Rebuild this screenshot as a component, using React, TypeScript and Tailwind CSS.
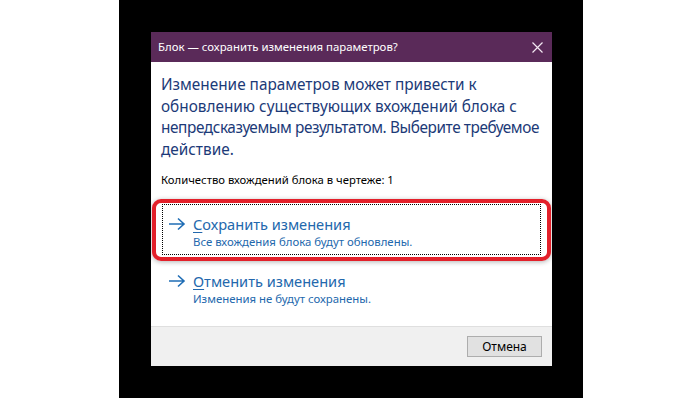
import React from "react";

const font = { fontFamily: '"Noto Sans", "Open Sans", sans-serif' };

function Arrow() {
  return (
    <svg width="18" height="14" viewBox="0 0 18 14" className="shrink-0">
      <path d="M1 7h15M10 1.5L16 7l-6 5.5" fill="none" stroke="#1f6db5" strokeWidth="1.6" />
    </svg>
  );
}

function CommandLink({ title, sub, focused }: { title: string; sub: string; focused?: boolean }) {
  return (
    <div
      className={
        "relative flex items-start gap-[7px] pl-[5px] pt-[10px] h-[51px] " +
        (focused ? "border border-dotted border-black" : "border border-transparent")
      }
    >
      <div className="pt-[2px]">
        <Arrow />
      </div>
      <div className="flex flex-col">
        <span className="text-[14.6px] leading-[18px] text-[#2368ad]">
          <span className="underline underline-offset-2 decoration-1">{title[0]}</span>
          {title.slice(1)}
        </span>
        <span className="mt-[2px] text-[11.4px] leading-[14px] text-[#2368ad]">{sub}</span>
      </div>
      {focused && (
        <div className="absolute -left-[11px] -right-[11px] -top-[6px] -bottom-[7px] rounded-[9px] border-[4px] border-[#e3202a] shadow-[0_1px_5px_rgba(0,0,0,0.3)]" />
      )}
    </div>
  );
}

export default function App() {
  return (
    <div className="w-[700px] h-[398px] bg-white" style={font}>
      <div className="ml-[119px] w-[464px] h-[398px] bg-black pt-[32px] pl-[32px]">
        <div className="w-[401px] h-[334px] bg-white flex flex-col">
          <div className="h-[30px] bg-[#5a2a59] flex items-center justify-between pl-[7px] pr-[9px]">
            <span className="text-[11.4px] text-white">Блок — сохранить изменения параметров?</span>
            <svg width="11" height="11" viewBox="0 0 11 11">
              <path d="M0.5 0.5l10 10M10.5 0.5l-10 10" stroke="#f2e8f2" strokeWidth="1.2" />
            </svg>
          </div>
          <div className="flex-1 flex flex-col pl-[10px] pr-[4px]">
            <p className="pt-[12px] text-[15.35px] leading-[21.5px] text-[#1c3a78] whitespace-nowrap">
              Изменение параметров может привести к<br />
              обновлению существующих вхождений блока с<br />
              <span className="tracking-[-0.4px]">непредсказуемым результатом. Выберите требуемое</span>
              <br />
              действие.
            </p>
            <p className="mt-[12px] text-[11.3px] leading-[16px] text-black">
              Количество вхождений блока в чертеже: 1
            </p>
            <div className="mt-[16px] ml-[1px] mr-[7px]">
              <CommandLink
                title="Сохранить изменения"
                sub="Все вхождения блока будут обновлены."
                focused
              />
            </div>
            <div className="mt-[6px] ml-[1px] mr-[7px]">
              <CommandLink title="Отменить изменения" sub="Изменения не будут сохранены." />
            </div>
          </div>
          <div className="h-[40px] bg-[#f0f0f0] border-t border-[#dfdfdf] flex items-center justify-end pr-[10px]">
            <button className="w-[75px] h-[21px] bg-[#e1e1e1] border border-[#adadad] text-[12px] text-black">
              Отмена
            </button>
          </div>
        </div>
      </div>
    </div>
  );
}
